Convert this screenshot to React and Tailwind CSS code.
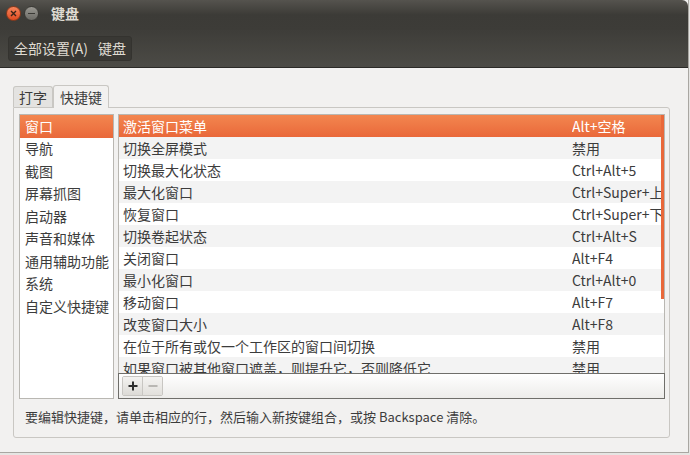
import React from 'react';

const cats = ['窗口', '导航', '截图', '屏幕抓图', '启动器', '声音和媒体', '通用辅助功能', '系统', '自定义快捷键'];

const rows = [
  ['激活窗口菜单', 'Alt+空格'],
  ['切换全屏模式', '禁用'],
  ['切换最大化状态', 'Ctrl+Alt+5'],
  ['最大化窗口', 'Ctrl+Super+上'],
  ['恢复窗口', 'Ctrl+Super+下'],
  ['切换卷起状态', 'Ctrl+Alt+S'],
  ['关闭窗口', 'Alt+F4'],
  ['最小化窗口', 'Ctrl+Alt+0'],
  ['移动窗口', 'Alt+F7'],
  ['改变窗口大小', 'Alt+F8'],
  ['在位于所有或仅一个工作区的窗口间切换', '禁用'],
  ['如果窗口被其他窗口遮盖，则提升它，否则降低它', '禁用'],
];

const font = { fontFamily: '"Noto Sans CJK SC", "Noto Sans", sans-serif' };

export default function App() {
  return (
    <div className="w-[690px] h-[455px] overflow-hidden bg-[#e6e5e3] text-[14px] text-[#3c3c3c]" style={font}>
      <div className="w-[689px] h-[453px] bg-[#f2f1f0] border-r border-b border-[#a9a7a2] flex flex-col">
        {/* title bar */}
        <div className="h-[30px] flex items-center pb-[3px] px-[6px] bg-gradient-to-b from-[#55534e] via-[#3c3b37] to-[#3d3c38] rounded-tr-[6px]">
          <div className="w-[15px] h-[15px] rounded-full bg-gradient-to-b from-[#f7845a] to-[#df4a1e] border border-[#8a3a1c] flex items-center justify-center">
            <svg width="7" height="7" viewBox="0 0 7 7"><path d="M1 1L6 6M6 1L1 6" stroke="#3a2418" strokeWidth="1.4" /></svg>
          </div>
          <div className="ml-[3px] w-[15px] h-[15px] rounded-full bg-gradient-to-b from-[#9a9892] to-[#6b6a65] border border-[#3a3935] flex items-center justify-center">
            <div className="w-[7px] h-[1.5px] bg-[#3a3935]" />
          </div>
          <span className="ml-[12px] font-bold text-[#dfdbd2] text-[14px]">键盘</span>
        </div>
        {/* toolbar */}
        <div className="h-[38px] flex items-center px-[8px] bg-gradient-to-b from-[#3e3d39] to-[#4c4b46] border-b border-[#2b2a27]">
          <div className="h-[25px] flex items-center gap-[10px] px-[5px] rounded-[3px] bg-[#393834] border border-[#34332f] text-[#dfdbd2]">
            <span>全部设置(A)</span>
            <span>键盘</span>
          </div>
        </div>
        {/* content */}
        <div className="px-[13px] pt-[16px] pr-[18px]">
          <div className="h-[23px] flex items-end">
            <div className="h-[21px] px-[5px] flex items-center bg-[#e4e3e1] border border-b-0 border-[#c9c7c3] rounded-t-[3px] text-[#3c3c3c]">打字</div>
            <div className="h-[23px] px-[6px] flex items-center bg-[#f2f1f0] border border-b-0 border-[#c9c7c3] rounded-t-[3px] relative -mb-px z-10">快捷键</div>
          </div>
          <div className="h-[331px] border border-[#c9c7c3] rounded-b-[3px] rounded-tr-[3px] pl-[5px] pt-[6px] bg-[#f2f1f0]">
            <div className="flex gap-[4px]">
              <div className="w-[95px] h-[285px] bg-white border border-[#b9b7b2]">
                {cats.map((c, i) => (
                  <div key={c} className={`h-[22.5px] flex items-center pl-[5px] ${i === 0 ? 'bg-gradient-to-b from-[#f3864f] to-[#e9683a] text-white' : ''}`}>{c}</div>
                ))}
              </div>
              <div className="w-[547px] h-[285px] flex flex-col">
                <div className="relative h-[259px] overflow-hidden bg-white border border-b-0 border-[#b9b7b2]">
                  {rows.map(([a, b], i) => (
                    <div key={a} className={`h-[22px] grid grid-cols-[449px_1fr] items-center pl-[4px] whitespace-nowrap ${i === 0 ? 'bg-gradient-to-b from-[#f3864f] to-[#e9683a] text-white' : i % 2 ? 'bg-[#f3f3f3]' : 'bg-white'}`}>
                      <span>{a}</span>
                      <span className="overflow-hidden">{b}</span>
                    </div>
                  ))}
                  <div className="absolute right-0 top-0 w-[3px] h-[184px] bg-[#e9683a]" />
                </div>
                <div className="h-[26px] flex items-center pl-[3px] border border-[#6f6e6a] bg-gradient-to-b from-[#ffffff] to-[#edecea]">
                  <div className="flex rounded-[2px] border border-[#c8c6c2] overflow-hidden">
                    <div className="w-[20px] h-[18px] flex items-center justify-center bg-gradient-to-b from-[#f4f3f1] to-[#dcdad6] border-r border-[#c8c6c2]">
                      <svg width="10" height="10" viewBox="0 0 10 10"><path d="M5 0.5V9.5M0.5 5H9.5" stroke="#2e2e2e" strokeWidth="2" /></svg>
                    </div>
                    <div className="w-[19px] h-[18px] flex items-center justify-center bg-gradient-to-b from-[#f4f3f1] to-[#e2e0dc]">
                      <svg width="10" height="10" viewBox="0 0 10 10"><path d="M0.5 5H9.5" stroke="#a8a6a2" strokeWidth="1.5" /></svg>
                    </div>
                  </div>
                </div>
              </div>
            </div>
            <div className="h-[35px] flex items-center pl-[6px] text-[13px]">要编辑快捷键，请单击相应的行，然后输入新按键组合，或按 Backspace 清除。</div>
          </div>
        </div>
      </div>
    </div>
  );
}
